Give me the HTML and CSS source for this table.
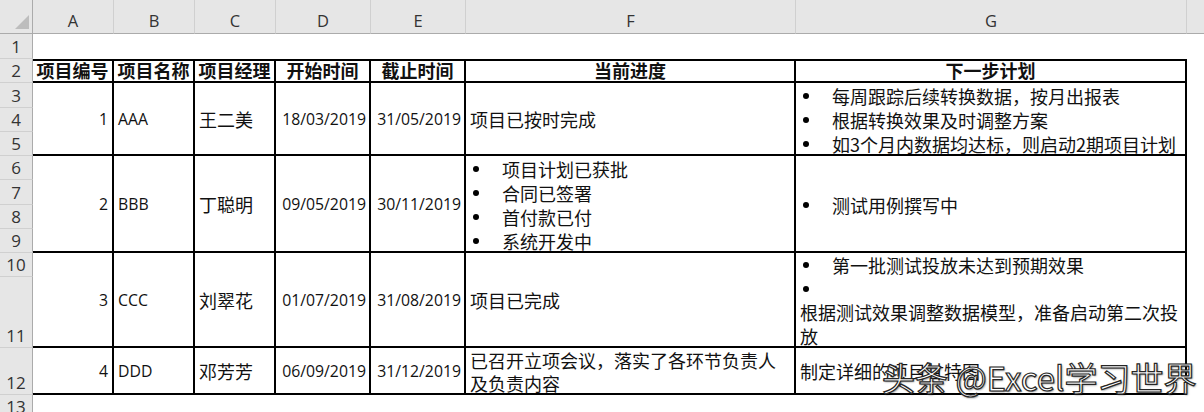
FILE: index.html
```html
<!DOCTYPE html>
<html lang="zh-CN">
<head>
<meta charset="utf-8">
<title>项目进度表</title>
<link rel="stylesheet" href="styles.css">
</head>
<body>
<div class="sheet">
  <div class="corner"><span class="tri"></span></div>
  <div class="colh">A</div>
  <div class="colh">B</div>
  <div class="colh">C</div>
  <div class="colh">D</div>
  <div class="colh">E</div>
  <div class="colh">F</div>
  <div class="colh">G</div>
  <div class="colh last"></div>

  <div class="rowh">1</div>
  <div class="rowh">2</div>
  <div class="th">项目编号</div>
  <div class="th">项目名称</div>
  <div class="th">项目经理</div>
  <div class="th">开始时间</div>
  <div class="th">截止时间</div>
  <div class="th">当前进度</div>
  <div class="th">下一步计划</div>

  <div class="rowh">3</div>
  <div class="td num lat s3">1</div>
  <div class="td lat s3">AAA</div>
  <div class="td s3">王二美</div>
  <div class="td date lat s3">18/03/2019</div>
  <div class="td date lat s3">31/05/2019</div>
  <div class="td s3">项目已按时完成</div>
  <div class="td s3">
    <div class="lines">
      <div class="li"><span class="b"></span>每周跟踪后续转换数据，按月出报表</div>
      <div class="li"><span class="b"></span>根据转换效果及时调整方案</div>
      <div class="li"><span class="b"></span>如3个月内数据均达标，则启动2期项目计划</div>
    </div>
  </div>
  <div class="rowh">4</div>
  <div class="rowh">5</div>

  <div class="rowh">6</div>
  <div class="td num lat s4">2</div>
  <div class="td lat s4">BBB</div>
  <div class="td s4">丁聪明</div>
  <div class="td date lat s4">09/05/2019</div>
  <div class="td date lat s4">30/11/2019</div>
  <div class="td s4">
    <div class="lines">
      <div class="li"><span class="b"></span>项目计划已获批</div>
      <div class="li"><span class="b"></span>合同已签署</div>
      <div class="li"><span class="b"></span>首付款已付</div>
      <div class="li"><span class="b"></span>系统开发中</div>
    </div>
  </div>
  <div class="td s4">
    <div class="lines">
      <div class="li"><span class="b"></span>测试用例撰写中</div>
    </div>
  </div>
  <div class="rowh">7</div>
  <div class="rowh">8</div>
  <div class="rowh">9</div>

  <div class="rowh">10</div>
  <div class="td num lat s2">3</div>
  <div class="td lat s2">CCC</div>
  <div class="td s2">刘翠花</div>
  <div class="td date lat s2">01/07/2019</div>
  <div class="td date lat s2">31/08/2019</div>
  <div class="td s2">项目已完成</div>
  <div class="td s2">
    <div class="lines tight">
      <div class="li"><span class="b"></span>第一批测试投放未达到预期效果</div>
      <div class="li"><span class="b"></span></div>
      <div class="li">根据测试效果调整数据模型，准备启动第二次投</div>
      <div class="li">放</div>
    </div>
  </div>
  <div class="rowh">11</div>

  <div class="rowh">12</div>
  <div class="td num lat">4</div>
  <div class="td lat">DDD</div>
  <div class="td">邓芳芳</div>
  <div class="td date lat">06/09/2019</div>
  <div class="td date lat">31/12/2019</div>
  <div class="td">
    <div class="lines tight">
      <div class="li">已召开立项会议，落实了各环节负责人</div>
      <div class="li">及负责内容</div>
    </div>
  </div>
  <div class="td">制定详细的项目甘特图</div>

  <div class="rowh top">13</div>
</div>
<div class="watermark">头条 @Excel学习世界</div>
</body>
</html>
```

FILE: styles.css
```css
* {
  box-sizing: border-box;
}

body {
  margin: 0;
  width: 1204px;
  height: 412px;
  overflow: hidden;
  position: relative;
  background: #fff;
  color: #111;
  font-family: "Noto Sans CJK SC", "Noto Sans", sans-serif;
  font-size: 18px;
}

.sheet {
  display: grid;
  grid-template-columns: 33px 81px 81px 81px 95px 95px 330px 391px 17px;
  grid-template-rows: 34px 25px 24px 25px 24px 24px 24px 25px 24px 24px 24px 71px 47px 17px;
}

.corner {
  background: #e6e6e6;
  border-right: 1px solid #ababab;
  border-bottom: 1px solid #ababab;
  display: flex;
  justify-content: flex-end;
  align-items: flex-end;
  padding: 0 3px 4px 0;
}

.tri {
  width: 0;
  height: 0;
  border-left: 14px solid transparent;
  border-bottom: 14px solid #bdbdbd;
}

.colh {
  background: #e6e6e6;
  border-bottom: 1px solid #ababab;
  border-right: 1px solid #d0d0d0;
  display: flex;
  align-items: flex-end;
  justify-content: center;
  color: #333;
  font-family: "Open Sans", "Noto Sans", sans-serif;
  font-size: 16.5px;
  line-height: 22px;
  padding-bottom: 1px;
}

.colh.last {
  border-right: none;
}

.rowh {
  grid-column: 1;
  background: #e6e6e6;
  border-right: 1px solid #ababab;
  border-bottom: 1px solid #d0d0d0;
  display: flex;
  align-items: flex-end;
  justify-content: center;
  color: #333;
  font-family: "Open Sans", "Noto Sans", sans-serif;
  font-size: 17px;
  line-height: 23px;
}

.rowh.top {
  align-items: flex-start;
  border-bottom: none;
}

.th,
.td {
  border-right: 2px solid #000;
  border-bottom: 2px solid #000;
  display: flex;
  align-items: center;
  padding: 0 4px;
  white-space: nowrap;
  line-height: 24px;
}

.th {
  border-top: 2px solid #000;
  justify-content: center;
  align-items: flex-end;
  font-weight: bold;
  line-height: 22px;
}

.lat {
  font-family: "Open Sans", "Noto Sans", sans-serif;
  font-size: 15.8px;
}

.s2 { grid-row: span 2; }
.s3 { grid-row: span 3; }
.s4 { grid-row: span 4; }

.num {
  justify-content: flex-end;
  padding-right: 4px;
}

.date {
  justify-content: flex-end;
  padding-right: 3px;
}

.lines {
  display: flex;
  flex-direction: column;
  padding-top: 2px;
}

.lines.tight .li {
  height: 23.5px;
}

.li {
  display: flex;
  align-items: center;
  height: 24px;
}

.b {
  width: 6px;
  height: 6px;
  border-radius: 50%;
  background: #000;
  margin: 0 23px 0 3px;
  flex: none;
}

.watermark {
  position: absolute;
  left: 882px;
  top: 357px;
  font-size: 33px;
  font-weight: 400;
  line-height: 40px;
  color: #fff;
  white-space: nowrap;
  -webkit-text-stroke: 1.2px #262626;
  text-shadow: 1px 1px 2px rgba(0, 0, 0, 0.5);
}
```
